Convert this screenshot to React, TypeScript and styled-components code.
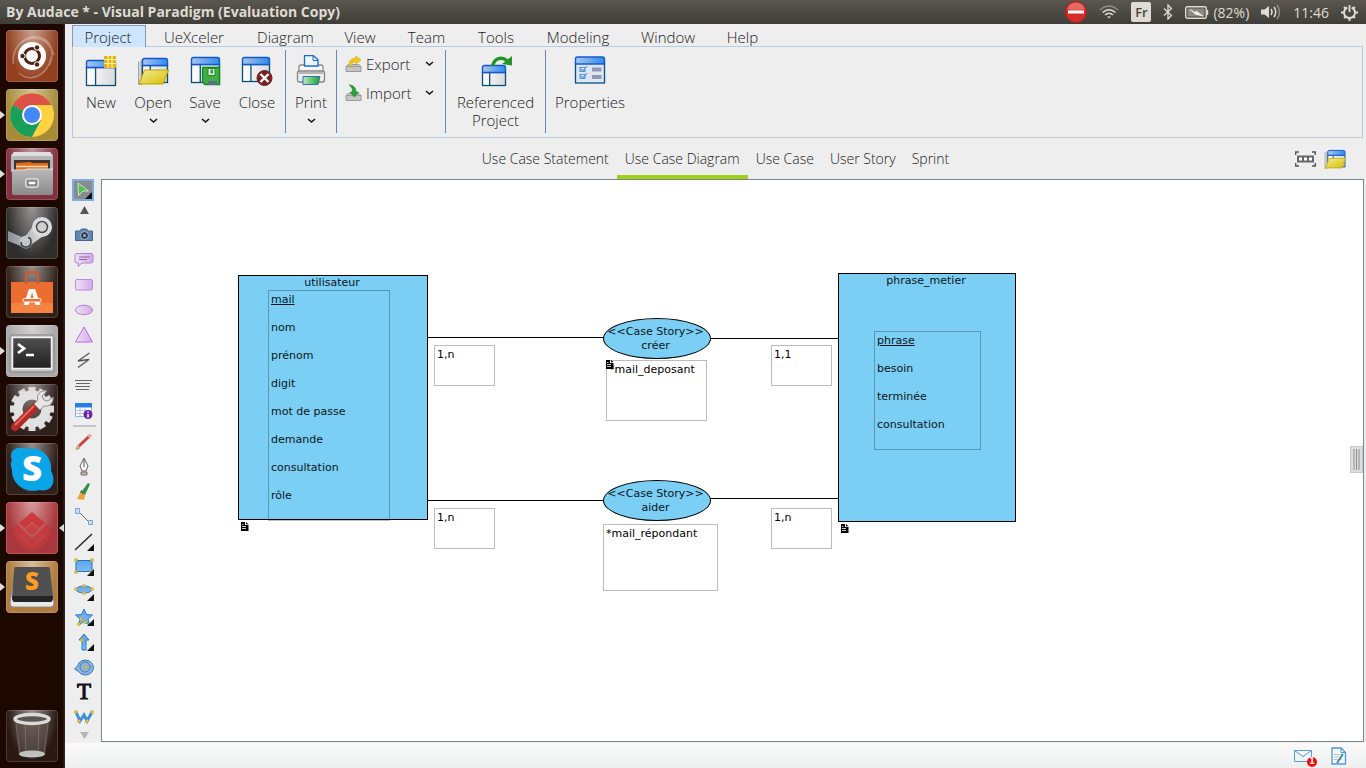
import React from "react";
import styled, { createGlobalStyle, css } from "styled-components";

const GlobalStyle = createGlobalStyle`
  *, *::before, *::after { box-sizing: border-box; }
  body { margin: 0; background: #eeeeee; }
  button { margin: 0; padding: 0; border: 0; background: none; color: inherit; font: inherit; cursor: default; }
  svg { display: block; flex: none; }
`;

const uiFont = `"Open Sans", "Noto Sans", sans-serif`;

const Page = styled.div`
  min-height: 100vh;
  display: flex;
  flex-direction: column;
  font-family: ${uiFont};
  font-size: 15px;
  font-weight: 300;
  color: #222222;
`;

/* ---------- system bar ---------- */

const SystemBar = styled.header`
  height: 24px;
  flex: none;
  display: flex;
  align-items: center;
  justify-content: space-between;
  padding: 0 8px 0 6px;
  background: linear-gradient(#59574e, #3e3d39);
  color: #dfdbd2;
  font-size: 14px;
  font-weight: 400;
`;

const WindowTitle = styled.h1`
  margin: 0;
  font-size: 14px;
  line-height: 24px;
  font-weight: 700;
`;

const Indicators = styled.div`
  display: flex;
  align-items: center;
  gap: 12px;
`;

const BatteryState = styled.div`
  display: flex;
  align-items: center;
  gap: 4px;
  white-space: nowrap;
`;

const Language = styled.button`
  width: 20px;
  height: 20px;
  border-radius: 2px;
  background: #dfdbd2;
  color: #45443f;
  font-size: 13px;
  line-height: 20px;
  font-weight: 600;
`;

/* ---------- launcher ---------- */

const Body = styled.div`
  flex: 1;
  display: flex;
`;

const Launcher = styled.nav`
  width: 65px;
  flex: none;
  display: flex;
  flex-direction: column;
  gap: 7px;
  padding: 6px 0;
  background: linear-gradient(90deg, #1d0800 0 63px, #2e2524 64px);
`;

const Tile = styled.button<{ $tint: string; $running?: boolean; $focused?: boolean; $last?: boolean }>`
  position: relative;
  width: 52px;
  height: 52px;
  margin-left: 6px;
  border-radius: 4px;
  background: radial-gradient(ellipse at 50% 0, rgba(255, 255, 255, 0.5), rgba(255, 255, 255, 0) 70%), ${(p) => p.$tint};
  box-shadow: inset 0 0 0 1px rgba(255, 255, 255, 0.16);
  ${(p) => p.$last && css`margin-top: auto;`}
  ${(p) =>
    p.$running &&
    css`
      &::before {
        content: "";
        position: absolute;
        left: -6px;
        top: 22px;
        border: 4px solid transparent;
        border-left: 5px solid #dddddd;
        border-right: 0;
      }
    `}
  ${(p) =>
    p.$focused &&
    css`
      &::after {
        content: "";
        position: absolute;
        right: -6px;
        top: 22px;
        border: 4px solid transparent;
        border-right: 5px solid #dddddd;
        border-left: 0;
      }
    `}
`;

/* ---------- menu and ribbon ---------- */

const Main = styled.main`
  flex: 1;
  min-width: 0;
  display: flex;
  flex-direction: column;
  background: #eeeeee;
`;

const MenuBar = styled.nav`
  display: grid;
  grid-template-columns: 74px 98px 85px 64px 69px 70px 94px 86px 63px;
  height: 23px;
  margin: 0 3px -1px 7px;
  padding-top: 1px;
  z-index: 1;
`;

const MenuItem = styled.button<{ $active?: boolean }>`
  line-height: 20px;
  padding-right: 2px;
  border: solid transparent;
  border-width: 1px 1px 0;
  ${(p) =>
    p.$active &&
    css`
      background: #cde5fd;
      border-color: #8399b1;
    `}
`;

const Ribbon = styled.section`
  display: flex;
  height: 92px;
  margin: 0 3px 0 7px;
  border: 1px solid #b5cde4;
`;

const Group = styled.div<{ $pad?: number }>`
  display: flex;
  margin: 3px 0 4px;
  padding: 0 ${(p) => p.$pad ?? 0}px;
  & + & { border-left: 1px solid #6985b9; }
`;

const BigButton = styled.button<{ $width: number }>`
  width: ${(p) => p.$width}px;
  display: flex;
  flex-direction: column;
  align-items: center;
  line-height: 18px;
  padding-top: 5px;
  & > span { margin-top: 6px; }
  & > svg + span + svg { margin-top: 7px; }
`;

const SmallList = styled.div`
  width: 108px;
  display: flex;
  flex-direction: column;
  gap: 2px;
  padding-left: 8px;
`;

const SmallButton = styled.button`
  height: 27px;
  display: grid;
  grid-template-columns: 21px 56px 12px;
  align-items: center;
  text-align: left;
  & > :last-child { justify-self: end; }
`;

/* ---------- view tabs ---------- */

const ViewBar = styled.div`
  display: grid;
  grid-template-columns: 1fr auto 1fr;
  height: 41px;
  font-size: 14px;
`;

const ViewTabs = styled.nav`
  grid-column: 2;
  display: flex;
`;

const ViewTab = styled.button<{ $active?: boolean }>`
  padding: 3px 8px 0;
  border-bottom: 4px solid ${(p) => (p.$active ? "#a0d117" : "transparent")};
  white-space: nowrap;
`;

const ViewActions = styled.div`
  justify-self: end;
  display: flex;
  align-items: center;
  gap: 8px;
  padding-right: 20px;
`;

/* ---------- workspace ---------- */

const Workspace = styled.div`
  flex: 1;
  display: flex;
`;

const Palette = styled.aside`
  width: 36px;
  flex: none;
  display: flex;
  flex-direction: column;
  align-items: center;
  padding-left: 2px;
`;

const Tool = styled.button<{ $active?: boolean; $height?: number }>`
  width: 24px;
  height: ${(p) => p.$height ?? 25}px;
  display: grid;
  place-items: center;
  ${(p) =>
    p.$active &&
    css`
      width: 22px;
      margin-right: 2px;
      background: #8b8b8b;
      border: 2px solid #7aaee6;
    `}
`;

const TextTool = styled.span`
  font: 400 23px/24px "Liberation Serif", serif;
  -webkit-text-stroke: 1px #111111;
  color: #111111;
`;

const PaletteRule = styled.hr`
  width: 23px;
  height: 2px;
  margin: 3px 0 2px;
  border: 0;
  background: #c6c6c6;
`;

const Canvas = styled.section`
  position: relative;
  flex: 1;
  min-height: 560px;
  margin-right: 2px;
  border: 1px solid #78868f;
  background: #ffffff;
  color: #0c1620;
  font: 400 11px/14px "DejaVu Sans", sans-serif;
  overflow: hidden;
`;

type Box = { $x: number; $y: number; $w: number; $h: number };

const placed = css<Box>`
  position: absolute;
  left: ${(p) => p.$x}px;
  top: ${(p) => p.$y}px;
  width: ${(p) => p.$w}px;
  height: ${(p) => p.$h}px;
`;

const Entity = styled.article<Box>`
  ${placed}
  padding-right: 2px;
  border: 1px solid #000000;
  background: #7bcef4;
  text-align: center;
`;

const Attributes = styled.ul<Box>`
  ${placed}
  margin: 0;
  padding: 2px;
  list-style: none;
  border: 1px solid rgba(0, 0, 0, 0.26);
  display: flex;
  flex-direction: column;
  gap: 14px;
`;

const Attribute = styled.li<{ $key?: boolean }>`
  text-decoration: ${(p) => (p.$key ? "underline" : "none")};
  white-space: nowrap;
`;

const Association = styled.article<Box>`
  ${placed}
  padding: 6px 3px 0 0;
  border: 1px solid #000000;
  border-radius: 50%;
  background: #7bcef4;
  text-align: center;
  white-space: nowrap;
  display: flex;
  flex-direction: column;
  align-items: center;
`;

const Note = styled.div<Box>`
  ${placed}
  padding: 2px;
  border: 1px solid #bcbcbc;
  color: #000000;
`;

const NoteMark = styled.span<{ $x: number; $y: number }>`
  position: absolute;
  left: ${(p) => p.$x}px;
  top: ${(p) => p.$y}px;
`;

const Links = styled.svg`
  position: absolute;
  left: 0;
  top: 0;
`;

const Handle = styled.button`
  position: absolute;
  right: 0;
  top: 266px;
  width: 13px;
  height: 27px;
  display: grid;
  place-items: center;
  background: #dedede;
  border: 1px solid #cacaca;
`;

const StatusBar = styled.footer`
  display: flex;
  align-items: center;
  justify-content: flex-end;
  gap: 15px;
  height: 26px;
  padding-right: 19px;
  border-top: 1px solid #f4efec;
  background: linear-gradient(#fafafa, #eef0f0);
`;

const MailButton = styled.button`
  position: relative;
`;

const Badge = styled.span`
  position: absolute;
  right: -1px;
  bottom: -5px;
  width: 10px;
  height: 10px;
  border-radius: 50%;
  background: #f50a0a;
  color: #ffffff;
  font: 700 8px/10px "DejaVu Sans", sans-serif;
  text-align: center;
`;

/* ---------- drawings ---------- */

const Defs = () => (
  <svg width="0" height="0" style={{ position: "absolute" }} aria-hidden="true">
    <defs>
      <linearGradient id="bar"><stop offset="0" stopColor="#a9c6ee" /><stop offset="1" stopColor="#2f8bea" /></linearGradient>
      <linearGradient id="pane"><stop offset="0" stopColor="#ffffff" /><stop offset="1" stopColor="#d8d8d8" /></linearGradient>
      <linearGradient id="folder" x2="1" y2="1"><stop offset="0" stopColor="#f4ec9a" /><stop offset="1" stopColor="#d8bd00" /></linearGradient>
      <linearGradient id="lilac"><stop offset="0" stopColor="#eee1f6" /><stop offset="1" stopColor="#d6a9ec" /></linearGradient>
      <linearGradient id="sky" x2="0" y2="1"><stop offset="0" stopColor="#5ba4ec" /><stop offset="1" stopColor="#82b9ee" /></linearGradient>
      <linearGradient id="steel" x2="0" y2="1"><stop offset="0" stopColor="#b9b9b9" /><stop offset="1" stopColor="#8a8a8a" /></linearGradient>
      <linearGradient id="green"><stop offset="0" stopColor="#b9e8bd" /><stop offset="1" stopColor="#10a52c" /></linearGradient>
      <linearGradient id="screen" x2="0" y2="1"><stop offset="0" stopColor="#505050" /><stop offset="1" stopColor="#202020" /></linearGradient>
      <linearGradient id="arm"><stop offset="0" stopColor="#8a8f98" /><stop offset="1" stopColor="#e6e6e6" /></linearGradient>
    </defs>
  </svg>
);

const Chevron = () => (
  <svg width="9" height="6" viewBox="0 0 9 6"><path d="M1 1l3.500 3 3.500-3" fill="none" stroke="#111" strokeWidth="1.500" /></svg>
);

const Win = ({ x, y, w, h }: { x: number; y: number; w: number; h: number }) => (
  <>
    <rect x={x + 0.5} y={y + 7.5} width={w - 1} height={h - 8} fill="url(#pane)" stroke="#0b4f78" strokeWidth="1.300" />
    <path d={`M${x + w * 0.32} ${y + 8}v${h - 9}`} stroke="#0b4f78" strokeWidth="1.300" />
    <path d={`M${x + 0.5} ${y + 7.5}v-5q0-2 2-2h${w - 5}q2 0 2 2v5z`} fill="url(#bar)" stroke="#1458d0" strokeWidth="1.400" />
  </>
);

const NewIcon = () => (
  <svg width="32" height="32" viewBox="0 0 32 32">
    <Win x={1} y={5} w={30} h={26} />
    <path d="M19 1h12v12H19z" fill="#e8b011" />
    <path d="M19 4.500h12M19 8.500h12M23 1v12M27 1v12" stroke="#fff3a8" strokeWidth="1.200" />
  </svg>
);
const FolderArt = () => (
  <>
    <path d="M1.500 6.500v23h3V5" fill="#d2d2d2" stroke="#a6a6a6" />
    <Win x={5} y={3} w={26} h={25} />
    <path d="M7.500 15h24l-5.500 14H2z" fill="url(#folder)" stroke="#b7a300" />
  </>
);
const OpenIcon = ({ size = 32 }: { size?: number }) => (
  <svg width={size} height={size} viewBox="0 0 32 32"><FolderArt /></svg>
);
const SaveIcon = () => (
  <svg width="32" height="32" viewBox="0 0 32 32">
    <Win x={2} y={2} w={29} h={26} />
    <path d="M13.500 12.500h17v17H16l-2.500-2.500z" fill="#43ac47" stroke="#0b8a1f" strokeWidth="1.300" />
    <path d="M19 13.500h7v7h-7z" fill="#e8f5e8" stroke="#15901f" /><path d="M21.500 14.500h2.500v4h-2.500z" fill="#2f9e38" />
    <path d="M19 26h9v4h-9z" fill="#58717f" />
  </svg>
);
const CloseIcon = () => (
  <svg width="32" height="32" viewBox="0 0 32 32">
    <Win x={1} y={2} w={28} h={25} />
    <circle cx="23.500" cy="23" r="7.500" fill="#7d1f22" stroke="#5a2a2c" />
    <path d="M19.500 19l8 8m0-8l-8 8" stroke="#fff" strokeWidth="2.400" />
  </svg>
);
const PrintIcon = () => (
  <svg width="32" height="32" viewBox="0 0 32 32">
    <path d="M4 19V12q0-2 2-2h20q2 0 2 2v7" fill="#f6f6f6" stroke="#8b8b8b" strokeWidth="1.300" />
    <path d="M9.500 11V.700h9l4.500 4V11z" fill="#eef5fd" stroke="#1d69d4" strokeWidth="1.300" /><path d="M18 1v4.500h5" fill="none" stroke="#1d69d4" />
    <path d="M2.500 18q0-2 2-2h23q2 0 2 2v7q0 2-2 2h-23q-2 0-2-2z" fill="#eeeeee" stroke="#858585" strokeWidth="1.300" />
    <path d="M4 18h24" stroke="#b4b4b4" strokeWidth="2" />
    <path d="M8 21.500h17l-2 8H8z" fill="url(#green)" stroke="#3b6db0" />
  </svg>
);
const Tray = () => <path d="M1 11.500h15v5H1zM3 9.500h11l2 2H1z" fill="#c4c4c4" stroke="#9b9b9b" />;
const ExportIcon = () => (
  <svg width="18" height="18" viewBox="0 0 18 18"><Tray /><path d="M4 10c0-4 2-7 7-7V1l5 4-5 4V7C8 7 7 8 7 10z" fill="#e9cb1c" stroke="#d0af12" strokeWidth=".600" /></svg>
);
const ImportIcon = () => (
  <svg width="18" height="18" viewBox="0 0 18 18"><Tray /><path d="M4 1c5 0 7 3 7 7h2.500L9.500 13l-4.500-5h2.500C7.500 5 7 3 4 1z" fill="#27a135" stroke="#198a28" strokeWidth=".600" /></svg>
);
const ReferencedIcon = () => (
  <svg width="32" height="32" viewBox="0 0 32 32">
    <Win x={2} y={10} w={24} h={21} />
    <path d="M12.500 11c2-8 9-10 15-5" fill="none" stroke="#239428" strokeWidth="3.500" /><path d="M32 1v9.500l-10-1.500z" fill="#239428" />
  </svg>
);
const PropertiesIcon = () => (
  <svg width="32" height="32" viewBox="0 0 32 32">
    <rect x="1.500" y="8" width="29" height="20" fill="#dce6f4" stroke="#0b4f78" strokeWidth="1.300" />
    <path d="M1.500 9V4q0-2 2-2h25q2 0 2 2v5z" fill="url(#bar)" stroke="#1458d0" strokeWidth="1.400" />
    <path d="M6 12.500h5v4H6zM6 19.500h5v4H6zM7 14l2 2 4-5M7 21l2 2 4-5" fill="none" stroke="#5c95d8" strokeWidth="1.200" />
    <path d="M18 14.500h9.500M18 22h9.500" stroke="#8e9ab2" strokeWidth="4" />
  </svg>
);
const FitIcon = () => (
  <svg width="21" height="16" viewBox="0 0 21 16">
    <path d="M.700 4V1H4M17 1h3.300v3M.700 12v3H4M17 15h3.300v-3" fill="none" stroke="#555" strokeWidth="1.400" />
    <path d="M2 4.500h17v7H2z" fill="#666" /><path d="M4 6.500h3v3H4zM9 6.500h3v3H9zM14 6.500h3v3h-3z" fill="#fff" />
  </svg>
);

const NoEntry = () => (
  <svg width="22" height="22" viewBox="0 0 22 22"><circle cx="11" cy="11" r="10.500" fill="#d52b2b" stroke="#b01f1f" /><path d="M2 8a9.500 9.500 0 0 1 18 0q-9 3-18 0z" fill="#ea8375" opacity=".7" /><path d="M3 9.500h16v3H3z" fill="#fff" /></svg>
);
const Wifi = () => (
  <svg width="20" height="14" viewBox="0 0 20 14" fill="none" stroke="#dfdbd2" strokeWidth="1.600">
    <path d="M1 5q9-8 18 0" opacity=".45" /><path d="M3.500 7.500q6.500-5.500 13 0M6 10q4-3.500 8 0" /><path d="M8 11.500h4l-2 2z" fill="#dfdbd2" stroke="none" />
  </svg>
);
const Bluetooth = () => (
  <svg width="10" height="16" viewBox="0 0 10 16"><path d="M1 4.500l7.500 7L5 15V1l3.500 3.500-7.500 7" fill="none" stroke="#dfdbd2" strokeWidth="1.300" /></svg>
);
const Battery = () => (
  <svg width="24" height="13" viewBox="0 0 24 13">
    <rect x=".700" y=".700" width="20.600" height="11.600" rx="1.500" fill="none" stroke="#dfdbd2" strokeWidth="1.400" />
    <rect x="2.500" y="2.500" width="17" height="8" fill="#8d8a82" /><path d="M22.500 4v5" stroke="#dfdbd2" strokeWidth="1.500" />
    <path d="M5 3.500l6 3.500V5l7 5-6-1.500L11 8.500z" fill="#f3f0e8" stroke="#f3f0e8" strokeWidth=".700" />
  </svg>
);
const Sound = () => (
  <svg width="20" height="16" viewBox="0 0 20 16"><path d="M0 5.500h3.500L8 2v12l-4.500-3.500H0z" fill="#dfdbd2" /><path d="M10 5q2 3 0 6M13 3q3.500 5 0 10" fill="none" stroke="#dfdbd2" strokeWidth="1.500" /><path d="M16 1q5 7 0 14" fill="none" stroke="#dfdbd2" opacity=".45" strokeWidth="1.500" /></svg>
);
const Power = () => (
  <svg width="17" height="17" viewBox="0 0 17 17" fill="none" stroke="#dfdbd2">
    <path d="M6.300 3.500a5.500 5.500 0 1 0 4.400 0" strokeWidth="2" /><path d="M8.500 1v7" strokeWidth="1.800" />
    <path d="M3 3l2 2M14 3l-2 2M0 8.500h3M14 8.500h3M3 14l2-2M14 14l-2-2M8.500 14v3" strokeWidth="2" />
  </svg>
);

const Art = ({ children }: { children: React.ReactNode }) => (
  <svg width="52" height="52" viewBox="0 0 52 52">{children}</svg>
);

const gearTeeth = Array.from({ length: 12 }, (_, i) => i * 30);

const apps: { name: string; tint: string; running?: boolean; focused?: boolean; last?: boolean; art: React.ReactNode }[] = [
  {
    name: "Dash", tint: "#93401f",
    art: <>
      <path d="M7 34C6 14 22 2 38 9c10 6 9 20 5 27M13 43C26 54 42 44 45 27M11 17C23 3 42 6 48 25" fill="none" stroke="#fff" strokeWidth="1.500" opacity=".3" />
      <circle cx="26" cy="26" r="14" fill="#fff" />
      <circle cx="26" cy="26" r="7.500" fill="none" stroke="#51200f" strokeWidth="3" />
      <g fill="#51200f" stroke="#fff" strokeWidth="1"><circle cx="16.500" cy="26" r="2.700" /><circle cx="31" cy="17.500" r="2.700" /><circle cx="31" cy="34.500" r="2.700" /></g>
    </>,
  },
  {
    name: "Chrome", tint: "#a78c38", running: true,
    art: <>
      <circle cx="26" cy="26" r="22" fill="#ffd143" />
      <path d="M26 26L6.500 16A22 22 0 0 1 45.500 16H26z" fill="#de5145" />
      <path d="M26 26L35 31 26 48A22 22 0 0 1 6.500 16z" fill="#1b9e5a" />
      <circle cx="26" cy="26" r="10" fill="#fff" /><circle cx="26" cy="26" r="8" fill="#4587f3" />
    </>,
  },
  {
    name: "Files", tint: "#82303d", running: true,
    art: <>
      <path d="M8 4h36l3 4v16H5V8z" fill="#b4b4b4" /><path d="M8 4h36l3 4H5z" fill="#dedede" /><path d="M8 12h36v11H8z" fill="#3c3230" />
      <path d="M10 15l14-1 2 1h16v9H10z" fill="#e3691f" /><path d="M10 18.500h32" stroke="#ffe0ac" strokeWidth="1.500" />
      <path d="M6 22h12l3-1h26v24q0 2-3 2H9q-3 0-3-2z" fill="url(#steel)" />
      <path d="M6 22h12l3-1h26" fill="none" stroke="#e2e2e2" />
      <rect x="19.500" y="30.500" width="13" height="9" rx="2" fill="#bbb" stroke="#d9d9d9" /><rect x="22" y="33" width="8" height="4" fill="#fff" stroke="#4b4b4b" />
    </>,
  },
  {
    name: "Steam", tint: "#302e2d",
    art: <>
      <path d="M2 24L18 31 27 19 40 27 26 37 20 41 2 34z" fill="url(#arm)" /><circle cx="36" cy="20" r="10" fill="#dcdcdc" /><circle cx="36" cy="20" r="5.500" fill="#cfcfcf" stroke="#4a4c50" strokeWidth="1.500" />
      <circle cx="20" cy="35" r="6.500" fill="#c4c6ca" /><path d="M15 35q0 5 5 5t5-5-3-4" stroke="#3b3c40" fill="none" strokeWidth="1.500" />
    </>,
  },
  {
    name: "Software Center", tint: "#30201c",
    art: <>
      <path d="M5 16h42v31H5z" fill="#ed6d31" /><path d="M5 37h42v10H5z" fill="#f58241" />
      <path d="M20 18V10q0-4 6-4t6 4v8" fill="none" stroke="#c75b35" strokeWidth="2.500" />
      <text x="26" y="39" textAnchor="middle" fontFamily="Open Sans" fontWeight="800" fontSize="23" fill="#fff">A</text>
      <rect x="17" y="32.500" width="18" height="3.500" rx="1.500" fill="#ed6d31" stroke="#fff" />
    </>,
  },
  {
    name: "Terminal", tint: "#a8a8a8", running: true,
    art: <>
      <rect x="4" y="10" width="44" height="37" rx="2" fill="#c4c4c4" stroke="#7e7e7e" /><rect x="6.500" y="12.500" width="39" height="31" fill="url(#screen)" stroke="#f2f2f2" strokeWidth="1.500" />
      <path d="M12 19l6 4.500-6 4.500" fill="none" stroke="#fff" strokeWidth="2.800" /><path d="M20 30h8" stroke="#fff" strokeWidth="2.500" />
    </>,
  },
  {
    name: "System Settings", tint: "#30201c",
    art: <>
      {gearTeeth.map((a) => <rect key={a} x="22.500" y="3" width="7" height="10" fill="#dcdcdc" transform={`rotate(${a} 26 25)`} />)}
      <circle cx="26" cy="25" r="14" fill="none" stroke="#e2e2e2" strokeWidth="9" />
      <path d="M9 43L30 22" stroke="#b22a26" strokeWidth="8" strokeLinecap="round" /><path d="M9 41L28 22" stroke="#e36a60" strokeWidth="2" />
      <path d="M28 20l6 6 4-4c5 1 10-3 9-9l-5 4-4-1-2-4 5-5c-7-1-11 4-9 9z" fill="#e5e5e5" stroke="#8d8d8d" />
    </>,
  },
  {
    name: "Skype", tint: "#30201c",
    art: <>
      <path d="M6 17C2 8 11 2 20 6c15-4 27 9 25 22 6 10 1 22-12 19C18 51 5 40 6 26 4 22 5 19 6 17z" fill="#0aa5e9" />
      <text x="26" y="38" textAnchor="middle" fontFamily="Open Sans" fontWeight="800" fontSize="35" fill="#fff">S</text>
    </>,
  },
  {
    name: "Visual Paradigm", tint: "#a9373b", running: true, focused: true,
    art: <g fill="#cd3034"><path d="M26 10l13 11-6 5-7-6-7 6-6-5z" opacity=".85" /><path d="M26 21l7 6-7 6-7-6z" opacity=".7" /><path d="M11 22l15 14 15-14 5 5-20 16L6 27z" opacity=".6" /><path d="M7 31l19 14 19-14v4L26 49 7 35z" opacity=".7" /></g>,
  },
  {
    name: "Sublime Text", tint: "#b07b3b", running: true,
    art: <>
      <path d="M9 8h34l5 34q0 4-3 4H7q-3 0-3-4z" fill="#e8e8e8" stroke="#8a8a8a" /><path d="M10 6h32q2 0 2 3l3 27q0 5-3 5H9q-3 0-3-5L8 9q0-3 2-3z" fill="#505050" /><path d="M6 35h41q0 6-3 6H9q-3 0-3-6z" fill="#242424" />
      <text x="26" y="29" textAnchor="middle" fontFamily="Open Sans" fontWeight="800" fontSize="24" fill="#ff9c24">S</text>
    </>,
  },
  {
    name: "Trash", tint: "#2a1813", last: true,
    art: <>
      <path d="M9 12h34l-4 33q-13 4-26 0z" fill="#5b4e49" opacity=".6" /><path d="M10 14l4 29M42 14l-4 29M19 14l1 30M33 14l-1 30" stroke="#b0a8a5" opacity=".35" />
      <ellipse cx="26" cy="44" rx="13" ry="3.500" fill="#bfc3bf" /><ellipse cx="26" cy="9" rx="17" ry="4.500" fill="#5a5350" stroke="#d9dbd8" strokeWidth="3.500" />
    </>,
  },
];

const T = ({ children, more }: { children: React.ReactNode; more?: boolean }) => (
  <svg width="22" height="20" viewBox="0 0 22 20">
    {children}
    {more && <path d="M21 12v7h-7z" fill="#111" />}
  </svg>
);
const Dots = ({ at }: { at: [number, number][] }) => (
  <g fill="#e2c93c" stroke="#b09a28" strokeWidth=".500">{at.map(([x, y]) => <circle key={`${x}-${y}`} cx={x} cy={y} r="1.600" />)}</g>
);

const shapeTools: [string, React.ReactNode][] = [
  ["Screenshot", <T><path d="M2.500 6h4l2-2h5l2 2h4v9.500h-17z" fill="#5f86b3" stroke="#46688f" /><circle cx="11.500" cy="10.500" r="4" fill="#333c48" stroke="#a8bdd6" /><circle cx="11.500" cy="10.500" r="1.500" fill="#8db1d8" /></T>],
  ["Callout", <T><path d="M4 3.500h14q2 0 2 2V11q0 2-2 2H9l-4 3.500.500-3.500H4q-2 0-2-2V5.500q0-2 2-2z" fill="url(#lilac)" stroke="#b282d2" /><path d="M6 7h11M6 9.500h8" stroke="#8b6a9e" /></T>],
  ["Rectangle note", <T><rect x="2.500" y="4.500" width="17" height="10.500" rx="1.500" fill="url(#lilac)" stroke="#bb8bd8" /></T>],
  ["Ellipse note", <T><ellipse cx="11" cy="10" rx="8.500" ry="4.700" fill="url(#lilac)" stroke="#b482d3" /></T>],
  ["Triangle note", <T><path d="M11 2l8.500 15h-17z" fill="url(#lilac)" stroke="#b26fe0" /></T>],
  ["Polyline", <T><path d="M16.500 3L5 11l11-1.500L5 17.500" fill="none" stroke="#555" strokeWidth="1.300" /></T>],
  ["Paragraph", <T><path d="M2 5.500h17M3 8.500h14M2 11.500h15M3 14.500h13" stroke="#666" /></T>],
  ["Info table", <T><path d="M2.500 3.500h16v13h-16z" fill="#fff" stroke="#86b5e8" /><path d="M2 3h17v4.500H2z" fill="#287ee3" /><path d="M3 10.500h15M3 13.500h15M7 8v8M12 8v8" stroke="#b4c7dc" /><circle cx="15" cy="14.500" r="4.500" fill="#6c28a2" /><path d="M15 11.500v1.300M15 14v3.500" stroke="#fff" strokeWidth="1.500" /></T>],
];

const drawTools: [string, React.ReactNode][] = [
  ["Pencil", <T><path d="M6 14L16 4.500" stroke="#c94444" strokeWidth="3" /><path d="M15.500 5l2.500-2.300" stroke="#e9a6a6" strokeWidth="3.500" /><path d="M3 17.500l1.500-4 2.500 2.500z" fill="#e9c388" stroke="#8b6b4b" strokeWidth=".600" /></T>],
  ["Pen", <T><path d="M11 1l4 8-2 5H9L7 9z" fill="#f5f5f5" stroke="#666" /><path d="M11 2v8" stroke="#555" /><path d="M8 15h6v3H8z" fill="#bbb" stroke="#866a62" /></T>],
  ["Brush", <T><path d="M15 1l2 1-4 9-4-2z" fill="#368b45" /><path d="M8 8l5 3-1 2-5-2z" fill="#4b774f" /><path d="M7 11l5 2-1 5-7-1z" fill="#eca535" /></T>],
  ["Connector", <T><path d="M5 4l12 12" stroke="#666" /><path d="M2.500 1.500h4v5h-4zM15.500 13.500h4v4h-4z" fill="#c8def5" stroke="#7ca5d4" /></T>],
  ["Line", <T more><path d="M2 18L19 2" stroke="#222" strokeWidth="1.300" /></T>],
  ["Rectangle", <T more><path d="M3 3.500h16v11H3z" fill="url(#sky)" stroke="#2575c8" /><Dots at={[[3, 3], [19, 3], [3, 15], [19, 15]]} /></T>],
  ["Ellipse", <T more><ellipse cx="11" cy="7.500" rx="8" ry="3.500" fill="url(#sky)" stroke="#3b82c9" /><Dots at={[[3, 7], [11, 4], [19, 7], [11, 11]]} /></T>],
  ["Star", <T more><path d="M11 2l2.500 5.500 6 .500-4.500 4 1.500 6-5.500-3.300L5.500 18 7 12 2.500 8l6-.500z" fill="url(#sky)" stroke="#2d79c8" /><Dots at={[[6, 17], [8, 12], [12, 15]]} /></T>],
  ["Arrow", <T more><path d="M11 2l5 6h-3v10H9V8H6z" fill="url(#sky)" stroke="#2d79c8" /><Dots at={[[9, 8]]} /></T>],
  ["Spiral", <T><path d="M1.500 12l3-3a8 7.500 0 1 1 1 5.500z" fill="#8cb4df" stroke="#3279bd" /><circle cx="12" cy="10" r="5" fill="none" stroke="#477fb9" /><Dots at={[[13, 10]]} /></T>],
  ["Text", <TextTool>T</TextTool>],
  ["Word art", <T><path d="M3 5l4 9 4-6 3 6 5-9" fill="none" stroke="#3f8fe0" strokeWidth="3" /><Dots at={[[3, 5], [6, 14], [14, 14], [19, 5]]} /></T>],
];

const NoteGlyph = () => (
  <svg width="8" height="9" viewBox="0 0 8 9"><path d="M0 0h4v3h3.500v6H0z" fill="#000" /><path d="M5 0l2.500 2.300H5z" fill="#000" /><path d="M1 2.500h1.500M1 4.500h4M1 6.500h4" stroke="#ccc" /></svg>
);

/* ---------- content ---------- */

const menus = ["Project", "UeXceler", "Diagram", "View", "Team", "Tools", "Modeling", "Window", "Help"];
const views = ["Use Case Statement", "Use Case Diagram", "Use Case", "User Story", "Sprint"];

const userFields = ["mail", "nom", "prénom", "digit", "mot de passe", "demande", "consultation", "rôle"];
const phraseFields = ["phrase", "besoin", "terminée", "consultation"];

const notes = [
  { x: 332, y: 165, w: 61, h: 41, text: "1,n" },
  { x: 669, y: 165, w: 61, h: 41, text: "1,1" },
  { x: 332, y: 328, w: 61, h: 41, text: "1,n" },
  { x: 669, y: 328, w: 61, h: 41, text: "1,n" },
  { x: 504, y: 180, w: 101, h: 61, text: "*mail_deposant" },
  { x: 501, y: 344, w: 115, h: 67, text: "*mail_répondant" },
];

const FieldList = ({ fields, ...box }: { fields: string[] } & Box) => (
  <Attributes {...box}>
    {fields.map((f, i) => <Attribute key={f} $key={i === 0}>{f}</Attribute>)}
  </Attributes>
);

const Diagram = () => (
  <Canvas aria-label="Use Case Diagram">
    <Links width="760" height="340" aria-hidden="true">
      <path d="M326 157.500H502M608 158.500H737M326 320.500H502M608 318.500H737" stroke="#000" />
    </Links>
    <Entity $x={136} $y={95} $w={190} $h={245}>utilisateur</Entity>
    <FieldList fields={userFields} $x={166} $y={110} $w={122} $h={231} />
    <Entity $x={736} $y={93} $w={178} $h={249}>phrase_metier</Entity>
    <FieldList fields={phraseFields} $x={772} $y={151} $w={107} $h={119} />
    <Association $x={501} $y={138} $w={108} $h={41}><span>&lt;&lt;Case Story&gt;&gt;</span><span>créer</span></Association>
    <Association $x={501} $y={300} $w={108} $h={41}><span>&lt;&lt;Case Story&gt;&gt;</span><span>aider</span></Association>
    {notes.map((n) => <Note key={`${n.x}-${n.y}`} $x={n.x} $y={n.y} $w={n.w} $h={n.h}>{n.text}</Note>)}
    <NoteMark $x={139} $y={342}><NoteGlyph /></NoteMark>
    <NoteMark $x={504} $y={180}><NoteGlyph /></NoteMark>
    <NoteMark $x={739} $y={344}><NoteGlyph /></NoteMark>
    <Handle aria-label="Show side panel">
      <svg width="7" height="21" viewBox="0 0 7 21"><path d="M1 0v21M3.500 0v21M6 0v21" stroke="#8d8d8d" /></svg>
    </Handle>
  </Canvas>
);

export default function App() {
  return (
    <Page>
      <GlobalStyle />
      <Defs />
      <SystemBar>
        <WindowTitle>By Audace * - Visual Paradigm (Evaluation Copy)</WindowTitle>
        <Indicators>
          <NoEntry /><Wifi /><Language>Fr</Language><Bluetooth />
          <BatteryState><Battery />(82%)</BatteryState>
          <Sound /><time>11:46</time><Power />
        </Indicators>
      </SystemBar>
      <Body>
        <Launcher aria-label="Launcher">
          {apps.map((a) => (
            <Tile key={a.name} aria-label={a.name} $tint={a.tint} $running={a.running} $focused={a.focused} $last={a.last}>
              <Art>{a.art}</Art>
            </Tile>
          ))}
        </Launcher>
        <Main>
          <MenuBar>
            {menus.map((m, i) => <MenuItem key={m} $active={i === 0}>{m}</MenuItem>)}
          </MenuBar>
          <Ribbon>
            <Group $pad={2}>
              <BigButton $width={52}><NewIcon /><span>New</span></BigButton>
              <BigButton $width={52}><OpenIcon /><span>Open</span><Chevron /></BigButton>
              <BigButton $width={52}><SaveIcon /><span>Save</span><Chevron /></BigButton>
              <BigButton $width={52}><CloseIcon /><span>Close</span></BigButton>
            </Group>
            <Group><BigButton $width={50}><PrintIcon /><span>Print</span><Chevron /></BigButton></Group>
            <Group>
              <SmallList>
                <SmallButton><ExportIcon />Export<Chevron /></SmallButton>
                <SmallButton><ImportIcon />Import<Chevron /></SmallButton>
              </SmallList>
            </Group>
            <Group><BigButton $width={99}><ReferencedIcon /><span>Referenced<br />Project</span></BigButton></Group>
            <Group><BigButton $width={88}><PropertiesIcon /><span>Properties</span></BigButton></Group>
          </Ribbon>
          <ViewBar>
            <ViewTabs>
              {views.map((v, i) => <ViewTab key={v} $active={i === 1}>{v}</ViewTab>)}
            </ViewTabs>
            <ViewActions>
              <button aria-label="Fit diagram"><FitIcon /></button>
              <button aria-label="Open diagram"><OpenIcon size={22} /></button>
            </ViewActions>
          </ViewBar>
          <Workspace>
            <Palette aria-label="Diagram tools">
              <Tool $active $height={22} aria-label="Select">
                <svg width="18" height="18" viewBox="0 0 18 18"><path d="M4 2l10.500 8-5.500 0-4.500 4.500z" fill="#4cc451" stroke="#dff3df" strokeWidth=".800" /><path d="M18 11v7h-7z" fill="#111" /></svg>
              </Tool>
              <Tool $height={21} aria-label="Scroll up"><svg width="9" height="12" viewBox="0 0 9 12"><path d="M4.500 0L9 8H0z" fill="#555" /></svg></Tool>
              {shapeTools.map(([name, art]) => <Tool key={name} aria-label={name}>{art}</Tool>)}
              <PaletteRule />
              {drawTools.map(([name, art]) => <Tool key={name} aria-label={name}>{art}</Tool>)}
              <Tool $height={13} aria-label="Scroll down"><svg width="9" height="7" viewBox="0 0 9 7"><path d="M0 0h9L4.500 7z" fill="#b5b5b5" /></svg></Tool>
            </Palette>
            <Diagram />
          </Workspace>
          <StatusBar>
            <MailButton aria-label="Messages">
              <svg width="22" height="12" viewBox="0 0 22 12"><path d="M.500.500h17v11H.500zM.500.500L9 6.500l8.500-6" fill="#eff5fb" stroke="#5a9ad8" /></svg>
              <Badge>1</Badge>
            </MailButton>
            <button aria-label="Description">
              <svg width="16" height="18" viewBox="0 0 16 18"><path d="M1 1h9l4.500 4.500V17H1z" fill="#f4f8fc" stroke="#5298df" strokeWidth="1.300" /><path d="M10 1v4.500h4.500" fill="none" stroke="#5298df" /><path d="M3 7.500h8M3 10h8M3 12.500h8" stroke="#c2c2c2" /><path d="M6 16l6-9" stroke="#28899a" strokeWidth="1.600" /></svg>
            </button>
          </StatusBar>
        </Main>
      </Body>
    </Page>
  );
}
